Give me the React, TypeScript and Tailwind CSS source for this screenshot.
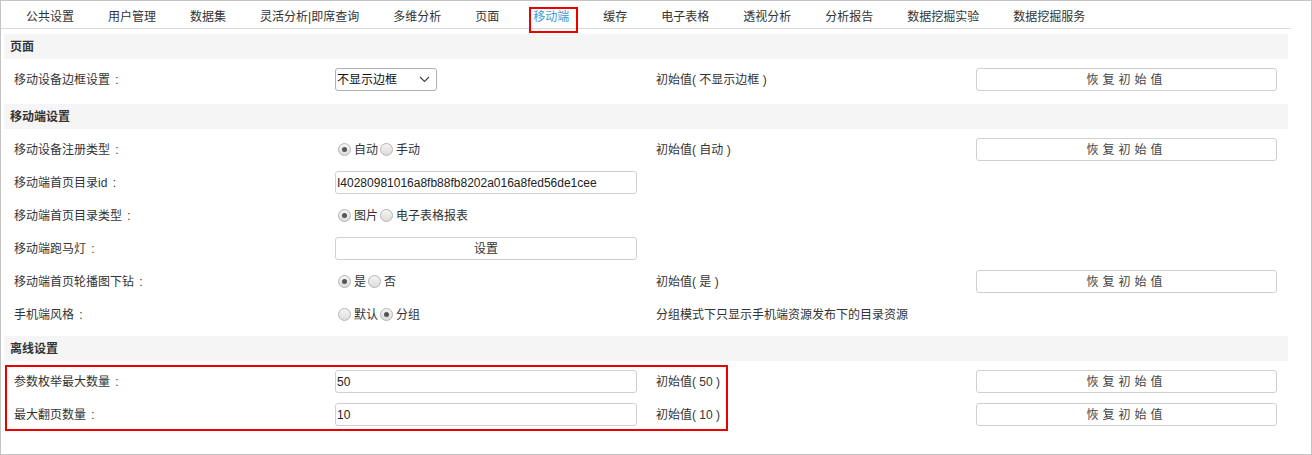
import { ReactNode } from 'react';

const FONT = { fontFamily: '"Liberation Sans", Arial, "Noto Sans CJK SC", sans-serif' };

const tabs = [
  '公共设置',
  '用户管理',
  '数据集',
  '灵活分析|即席查询',
  '多维分析',
  '页面',
  '移动端',
  '缓存',
  '电子表格',
  '透视分析',
  '分析报告',
  '数据挖掘实验',
  '数据挖掘服务',
];

function Radio({ checked, label }: { checked?: boolean; label: string }) {
  return (
    <span className="inline-flex items-center">
      <span className="mr-[3px] flex h-[13px] w-[13px] items-center justify-center rounded-full border border-[#b5b5b5] bg-gradient-to-b from-[#f4f4f4] to-[#dcdcdc]">
        {checked && <span className="h-[5px] w-[5px] rounded-full bg-[#555]" />}
      </span>
      <span>{label}</span>
    </span>
  );
}

function RadioGroup({ items, value }: { items: string[]; value: number }) {
  return (
    <div className="flex items-center gap-[2px] pl-[3px]">
      {items.map((it, i) => (
        <Radio key={it} label={it} checked={i === value} />
      ))}
    </div>
  );
}

function ResetButton() {
  return (
    <button className="h-[23px] w-[301px] rounded-[3px] border border-[#d0d0d0] bg-white text-[12px] tracking-[4px] text-[#444]">
      恢复初始值
    </button>
  );
}

function TextInput({ value }: { value: string }) {
  return (
    <div className="flex h-[23px] w-[302px] items-center rounded-[3px] border border-[#d0d0d0] bg-white pl-[1px] text-[12px] text-[#222]">
      {value}
    </div>
  );
}

function Row({
  label,
  control,
  init,
  reset,
}: {
  label: string;
  control?: ReactNode;
  init?: ReactNode;
  reset?: boolean;
}) {
  return (
    <div className="flex h-[33px] items-center text-[12px] text-[#333]">
      <div className="w-[321px] pl-[10px]">
        {label}
        <span className="inline-block w-[14px] text-center">:</span>
      </div>
      <div className="w-[321px] pl-[10px]">{control}</div>
      <div className="w-[321px] pl-[10px]">{init}</div>
      <div className="w-[321px] pl-[9px]">{reset && <ResetButton />}</div>
    </div>
  );
}

function SectionHeader({ title }: { title: string }) {
  return (
    <div className="flex h-[25px] w-[1284px] items-center bg-[#f5f5f5] pl-[6px] text-[12px] font-bold text-[#333]">
      {title}
    </div>
  );
}

export default function App() {
  return (
    <div className="h-[455px] w-[1312px] border border-[#c4c4c4] bg-white" style={FONT}>
      {/* 顶部标签栏 */}
      <div className="mr-[20px] flex h-[28px] items-center border-b border-[#d8d8d8] pl-[8px] text-[12px] text-[#333]">
        {tabs.map((t) => (
          <div key={t} className="relative px-[17px] pt-[5px]">
            <span className={t === '移动端' ? 'text-[#3d9ad6]' : ''}>{t}</span>
            {t === '移动端' && (
              <div className="absolute left-[13px] top-[4px] h-[26px] w-[49px] border-2 border-[#ee0000]" />
            )}
          </div>
        ))}
      </div>

      <div className="pl-[3px] pt-[5px]">
        <SectionHeader title="页面" />
        <div className="pb-[8px] pt-[4px]">
          <Row
            label="移动设备边框设置"
            control={
              <div className="flex h-[23px] w-[102px] items-center justify-between rounded-[3px] border border-[#b0b0b0] pl-[1px] pr-[6px] text-[#111]">
                <span>不显示边框</span>
                <svg width="11" height="7" viewBox="0 0 11 7" fill="none" stroke="#444" strokeWidth="1.2">
                  <path d="M1 1l4.5 4.5L10 1" />
                </svg>
              </div>
            }
            init="初始值( 不显示边框 )"
            reset
          />
        </div>

        <SectionHeader title="移动端设置" />
        <div className="pb-[5px] pt-[4px]">
          <Row label="移动设备注册类型" control={<RadioGroup items={['自动', '手动']} value={0} />} init="初始值( 自动 )" reset />
          <Row label="移动端首页目录id" control={<TextInput value="I40280981016a8fb88fb8202a016a8fed56de1cee" />} />
          <Row label="移动端首页目录类型" control={<RadioGroup items={['图片', '电子表格报表']} value={0} />} />
          <Row
            label="移动端跑马灯"
            control={
              <button className="h-[23px] w-[302px] rounded-[3px] border border-[#d0d0d0] bg-white text-[12px] text-[#333]">
                设置
              </button>
            }
          />
          <Row label="移动端首页轮播图下钻" control={<RadioGroup items={['是', '否']} value={0} />} init="初始值( 是 )" reset />
          <Row
            label="手机端风格"
            control={<RadioGroup items={['默认', '分组']} value={1} />}
            init={<span className="whitespace-nowrap">分组模式下只显示手机端资源发布下的目录资源</span>}
          />
        </div>

        <SectionHeader title="离线设置" />
        <div className="relative pt-[4px]">
          <Row label="参数枚举最大数量" control={<TextInput value="50" />} init="初始值( 50 )" reset />
          <Row label="最大翻页数量" control={<TextInput value="10" />} init="初始值( 10 )" reset />
          <div className="absolute left-[1px] top-[4px] h-[66px] w-[723px] border-2 border-[#ee0000]" />
        </div>
      </div>
    </div>
  );
}
